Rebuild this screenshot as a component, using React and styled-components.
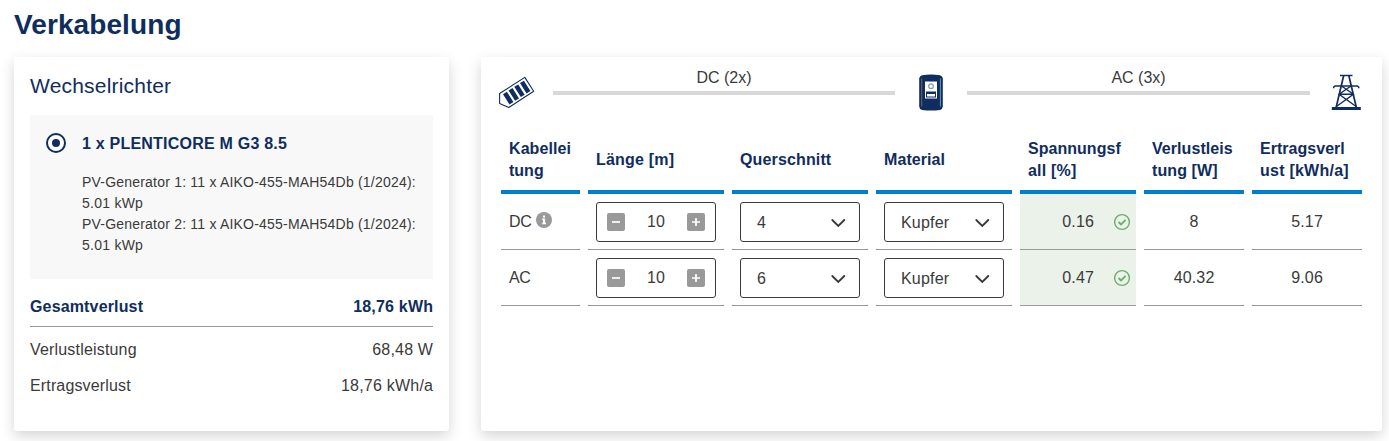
import React from "react";
import styled, { createGlobalStyle } from "styled-components";

const NAVY = "#0f2d5e";
const INK = "#3a3a3a";
const BLUE = "#007dcd";
const GREY = "#999999";

const GlobalStyle = createGlobalStyle`
  *, *::before, *::after { box-sizing: border-box; }
  body {
    margin: 0;
    background: #fff;
    color: ${INK};
    font: 16px/22px "Liberation Sans", Arial, sans-serif;
  }
  #root { height: 441px; overflow: hidden; }
`;

const Page = styled.main`
  height: 441px;
  padding: 6px 7px 10px 14px;
  overflow: hidden;
`;

const Title = styled.h1`
  margin: 0;
  height: 51px;
  color: ${NAVY};
  font-size: 28px;
  line-height: 38px;
  letter-spacing: 0.1px;
`;

const Columns = styled.div`
  display: grid;
  grid-template-columns: 435px 901px;
  gap: 32px;
  height: 374px;
`;

const Card = styled.section`
  background: #fff;
  border-radius: 3px;
  box-shadow: 0 5px 14px rgba(0, 0, 0, 0.17);
`;

const InverterCard = styled(Card)`
  padding: 16px;
`;

const CardTitle = styled.h2`
  margin: 0;
  height: 42px;
  color: ${NAVY};
  font-size: 21px;
  font-weight: 400;
  line-height: 26px;
  letter-spacing: 0.2px;
`;

const InverterOption = styled.div`
  display: grid;
  grid-template-columns: 20px 1fr;
  column-gap: 16px;
  height: 164px;
  padding: 18px 0 0 16px;
  background: #f8f8f8;
`;

const Radio = styled.span`
  display: grid;
  place-items: center;
  width: 20px;
  height: 20px;
  border: 2px solid ${NAVY};
  border-radius: 50%;
  background: #fff;

  &::after {
    content: "";
    width: 8px;
    height: 8px;
    border-radius: 50%;
    background: ${NAVY};
  }
`;

const InverterName = styled.strong`
  display: block;
  color: ${NAVY};
  line-height: 22px;
  letter-spacing: 0.22px;
`;

const GeneratorList = styled.div`
  margin-top: 17px;
  font-size: 14px;
  line-height: 21px;
  white-space: nowrap;
`;

const Line = styled.div`
  letter-spacing: ${(p) => p.$track || 0}px;
`;

const LossRow = styled.div`
  display: flex;
  justify-content: space-between;
  align-items: center;
  height: 36px;
`;

const LossTotal = styled(LossRow)`
  height: 48px;
  margin-bottom: 5px;
  padding-top: 9px;
  border-bottom: 1px solid ${GREY};
  color: ${NAVY};
  font-weight: 700;
`;

const Track = styled.span`
  letter-spacing: ${(p) => p.$track || 0}px;
  margin-right: ${(p) => -(p.$track || 0)}px;
`;

const CableCard = styled(Card)`
  padding: 9px 20px 0;
`;

const Diagram = styled.div`
  display: grid;
  grid-template-columns: 52px 342px 72px 343px 52px;
  height: 60px;
`;

const DiagramIcon = styled.div`
  display: flex;
  justify-content: ${(p) => p.$align || "center"};
  padding-top: 8px;
  margin-left: ${(p) => p.$shift || 0}px;

  svg { flex: none; display: block; }
`;

const Connection = styled.div`
  padding-top: 1px;
  text-align: center;

  &::after {
    content: "";
    display: block;
    height: 4px;
    margin-top: 2px;
    background: #d8d8d8;
  }
`;

const Table = styled.div`
  display: grid;
  grid-template-columns: 79px 136px 136px 136px 116px 100px 110px;
  grid-template-rows: 68px 56px 56px;
  column-gap: 8px;
`;

const HeadCell = styled.div`
  display: flex;
  flex-direction: column;
  justify-content: center;
  padding: 4px 8px 0;
  border-bottom: 4px solid ${BLUE};
  color: ${NAVY};
  font-weight: 700;
  white-space: nowrap;
`;

const Cell = styled.div`
  display: flex;
  align-items: center;
  gap: 4px;
  padding: 0 8px;
  border-bottom: 1px solid ${GREY};
`;

const NumberCell = styled(Cell)`
  justify-content: center;
`;

const StatusCell = styled(Cell)`
  justify-content: flex-end;
  gap: 19px;
  padding-right: 5px;
  background: #ebf2ea;
`;

const Control = styled.div`
  display: flex;
  align-items: center;
  justify-content: space-between;
  width: 120px;
  height: 40px;
  border: 1px solid ${INK};
  border-radius: 3px;
`;

const StepperBox = styled(Control)`
  padding: 0 10px;
`;

const SelectBox = styled(Control)`
  padding: 2px 13px 0 16px;
`;

const StepButton = styled.button`
  display: block;
  width: 18px;
  height: 18px;
  padding: 0;
  border: 0;
  border-radius: 2px;
  background: ${GREY};

  svg { display: block; }
`;

const InfoWrap = styled.span`
  margin-top: -4px;
  line-height: 0;
`;

function StepGlyph({ plus }) {
  return (
    <svg width="18" height="18" viewBox="0 0 18 18" stroke="#fff" strokeWidth="1.7">
      <path d={plus ? "M5 9h8M9 5v8" : "M5 9h8"} />
    </svg>
  );
}

function Stepper({ value }) {
  return (
    <StepperBox>
      <StepButton aria-label="Weniger"><StepGlyph /></StepButton>
      <span>{value}</span>
      <StepButton aria-label="Mehr"><StepGlyph plus /></StepButton>
    </StepperBox>
  );
}

function Select({ value, track }) {
  return (
    <SelectBox>
      <Track $track={track}>{value}</Track>
      <svg width="16" height="10" viewBox="0 0 16 10" fill="none" stroke={INK} strokeWidth="1.9">
        <path d="M2.300 2 8.300 7.900l6-5.900" strokeLinecap="round" />
      </svg>
    </SelectBox>
  );
}

function InfoIcon() {
  return (
    <InfoWrap>
      <svg width="16" height="16" viewBox="0 0 16 16">
        <circle cx="8" cy="8" r="8" fill={GREY} />
        <path d="M7 3.4h2.1v2H7zM6.2 6.6h2.9v4.2h.9v1.4H6.1v-1.4H7V8h-.8z" fill="#fff" />
      </svg>
    </InfoWrap>
  );
}

function CheckIcon() {
  return (
    <svg width="18" height="18" viewBox="0 0 18 18" fill="none" stroke="#6cae6c">
      <circle cx="9" cy="9" r="7.4" strokeWidth="1.4" />
      <path d="m5.5 9 2.5 2.5 4.6-4.6" strokeWidth="1.8" />
    </svg>
  );
}

function PanelIcon() {
  return (
    <svg width="37" height="35" viewBox="0 0 37 35">
      <path
        d="M1.6 19.5 26.800 3.400l8.900 13.900L10.800 33.500 1.600 29.500Z"
        fill="#fff" stroke={NAVY} strokeWidth="1.100" strokeLinejoin="round"
      />
      <path
        d="m5 20.200 3.900-2.400 6.500 10.300-3.900 2.400zm5.600-3.700 3.900-2.400 6.500 10.300-3.900 2.400zm5.700-3.700 3.900-2.400 6.500 10.300-3.900 2.400zm5.700-3.700 3.900-2.400 6.500 10.300-3.900 2.400z"
        fill={NAVY}
      />
    </svg>
  );
}

function InverterIcon() {
  return (
    <svg width="26" height="38" viewBox="0 0 26 38">
      <path d="M4 1.200Q13-.2 22 1.200q2.600.700 2.800 3.400v28q-.2 2.800-2.800 3.400-9 1-18 0-2.600-.600-2.800-3.400v-28Q1.400 1.900 4 1.200Z" fill={NAVY} />
      <path d="M3.700 4.500v28" stroke="#8b6b78" strokeWidth=".8" />
      <path d="M22.400 4.500v28" stroke="#67a4d0" strokeWidth=".9" />
      <path d="M7 7.500h12v17H7z" fill="#fff" />
      <circle cx="13" cy="12.200" r="2.300" fill="none" stroke="#8796af" strokeWidth="1.200" />
      <path d="M8 17.500h10v6H8z" fill={NAVY} />
      <path d="M9 20h8v2.500H9z" fill="#fff" />
    </svg>
  );
}

function PylonIcon() {
  return (
    <svg width="31" height="38" viewBox="0 0 31 38" fill="none" stroke={NAVY}>
      <path d="M9 1.500h12.500" strokeWidth="1.500" />
      <path d="M2.700 14.200v-1.200l1.300-1.100h22.400l1.300 1.100v1.200" strokeWidth="1.500" />
      <path d="M12.700 1.500 5 34M17.800 1.500 25.500 34" strokeWidth="1.700" />
      <path d="m10.500 12 11.900 8.200L5.400 32.500M20 12 8.100 20.200l17 12.300M8.200 20.200h14.100" strokeWidth="1.400" />
      <path d="M.8 34.500h29" strokeWidth="3" />
    </svg>
  );
}

const HEADINGS = [
  [["Kabellei", 0.08], ["tung", 0]],
  [["Länge [m]", 0.2]],
  [["Querschnitt", 0.14]],
  [["Material", 0.08]],
  [["Spannungsf", 0.03], ["all [%]", 0.2]],
  [["Verlustleis", 0.06], ["tung [W]", 0.1]],
  [["Ertragsverl", 0.03], ["ust [kWh/a]", 0.24]],
];

const CABLES = [
  { name: "DC", info: true, length: 10, section: "4", drop: "0.16", power: "8", yieldLoss: "5.17" },
  { name: "AC", length: 10, section: "6", drop: "0.47", power: "40.32", yieldLoss: "9.06" },
];

const GENERATORS = [1, 2];

export default function App() {
  return (
    <>
      <GlobalStyle />
      <Page>
        <Title>Verkabelung</Title>
        <Columns>
          <InverterCard>
            <CardTitle>Wechselrichter</CardTitle>
            <InverterOption>
              <Radio />
              <div>
                <InverterName>1 x PLENTICORE M G3 8.5</InverterName>
                <GeneratorList>
                  {GENERATORS.map((n) => (
                    <React.Fragment key={n}>
                      <Line $track={0.205}>PV-Generator {n}: 11 x AIKO-455-MAH54Db (1/2024):</Line>
                      <Line $track={0.25}>5.01 kWp</Line>
                    </React.Fragment>
                  ))}
                </GeneratorList>
              </div>
            </InverterOption>
            <LossTotal>
              <Track $track={0.15}>Gesamtverlust</Track>
              <Track $track={0.2}>18,76 kWh</Track>
            </LossTotal>
            <LossRow>
              <Track $track={0.18}>Verlustleistung</Track>
              <Track $track={0.2}>68,48 W</Track>
            </LossRow>
            <LossRow>
              <Track $track={0.15}>Ertragsverlust</Track>
              <Track $track={0.22}>18,76 kWh/a</Track>
            </LossRow>
          </InverterCard>
          <CableCard>
            <Diagram>
              <DiagramIcon $align="flex-start" $shift={-3}><PanelIcon /></DiagramIcon>
              <Connection><Track>DC (2x)</Track></Connection>
              <DiagramIcon><InverterIcon /></DiagramIcon>
              <Connection><Track>AC (3x)</Track></Connection>
              <DiagramIcon $align="flex-end"><PylonIcon /></DiagramIcon>
            </Diagram>
            <Table>
              {HEADINGS.map((lines) => (
                <HeadCell key={lines[0][0]}>
                  {lines.map(([text, track]) => <Line key={text} $track={track}>{text}</Line>)}
                </HeadCell>
              ))}
              {CABLES.map((c) => (
                <React.Fragment key={c.name}>
                  <Cell><Track $track={-0.3}>{c.name}</Track>{c.info && <InfoIcon />}</Cell>
                  <Cell><Stepper value={c.length} /></Cell>
                  <Cell><Select value={c.section} /></Cell>
                  <Cell><Select value="Kupfer" track={0.2} /></Cell>
                  <StatusCell><Track $track={0.2}>{c.drop}</Track><CheckIcon /></StatusCell>
                  <NumberCell><Track $track={0.15}>{c.power}</Track></NumberCell>
                  <NumberCell><Track $track={0.15}>{c.yieldLoss}</Track></NumberCell>
                </React.Fragment>
              ))}
            </Table>
          </CableCard>
        </Columns>
      </Page>
    </>
  );
}
